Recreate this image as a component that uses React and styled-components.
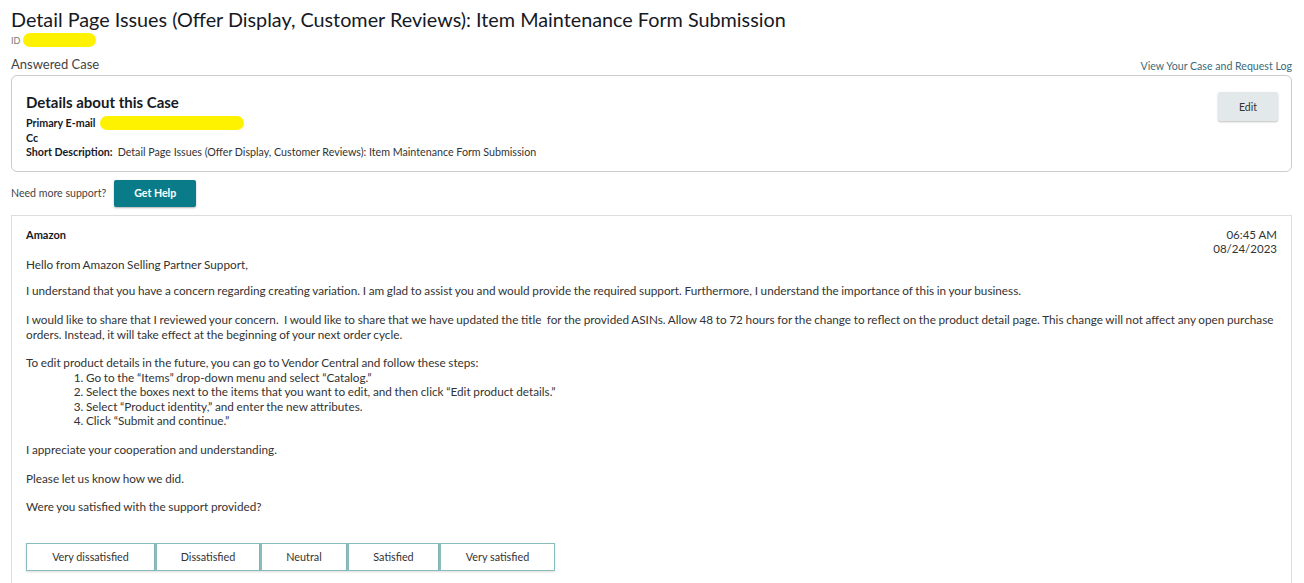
import React from 'react'
import styled, {createGlobalStyle} from 'styled-components'

const GlobalStyle = createGlobalStyle`
  html, body {
    margin: 0;
    padding: 0;
    background: #fff;
  }
  body {
    font-family: Lato, "Open Sans", "Liberation Sans", sans-serif;
    color: #333;
  }
`

const Page = styled.div`
  padding: 6px 12px 0 11px;
  height: 583px;
  overflow: hidden;
  box-sizing: border-box;
`

const Title = styled.h1`
  margin: 0;
  font-size: 19.8px;
  font-weight: 400;
  line-height: 26px;
  color: #16191f;
`

const IdRow = styled.div`
  display: flex;
  align-items: center;
  gap: 3px;
  height: 16px;
  font-size: 9px;
  color: #777;
`

const Marker = styled.span`
  display: inline-block;
  width: ${p => p.w}px;
  height: 14px;
  border-radius: 7px;
  background: #fff200;
`

const StatusRow = styled.div`
  display: flex;
  justify-content: space-between;
  align-items: flex-end;
  margin-top: 8px;
  height: 16px;
`

const Status = styled.span`
  font-size: 13px;
  color: #444;
`

const LogLink = styled.a`
  font-size: 10.6px;
  color: #3d6b78;
  text-decoration: none;
  cursor: pointer;
`

const DetailsCard = styled.section`
  margin-top: 3px;
  border: 1px solid #ccc;
  border-radius: 6px;
  padding: 16px 13px 11px 14px;
  display: flex;
  justify-content: space-between;
  align-items: flex-start;
`

const DetailsHead = styled.h2`
  margin: 0 0 4px;
  font-size: 15px;
  font-weight: 700;
  color: #16191f;
  line-height: 20px;
`

const Field = styled.div`
  display: flex;
  align-items: center;
  gap: 3px;
  font-size: 10.7px;
  line-height: 14.5px;
  color: #333;
`

const Label = styled.b`
  font-weight: 700;
  color: #16191f;
  margin-right: 2px;
`

const GreyButton = styled.button`
  margin-top: 0;
  width: 60px;
  height: 29px;
  border: none;
  border-radius: 2px;
  background: #e3e9ea;
  box-shadow: 0 1px 2px rgba(0, 0, 0, 0.25);
  font-family: inherit;
  font-size: 10.5px;
  color: #333;
`

const SupportRow = styled.div`
  display: flex;
  align-items: center;
  gap: 8px;
  margin: 8px 0 8px;
  font-size: 10.6px;
  color: #444;
`

const TealButton = styled.button`
  width: 82px;
  height: 27px;
  border: none;
  border-radius: 2px;
  background: #0a7c89;
  box-shadow: 0 1px 2px rgba(0, 0, 0, 0.3);
  color: #fff;
  font-family: inherit;
  font-weight: 700;
  font-size: 10.6px;
`

const Message = styled.article`
  border: 1px solid #ddd;
  border-bottom: none;
  padding: 12px 14px 20px 14px;
  font-size: 11.75px;
  line-height: 14.4px;
  word-spacing: -0.35px;
  color: #333;
`

const MessageHead = styled.div`
  display: flex;
  justify-content: space-between;
  align-items: flex-start;
  margin-bottom: 2px;
  word-spacing: normal;
`

const Sender = styled.b`
  font-size: 11px;
  font-weight: 700;
  color: #16191f;
`

const Stamp = styled.div`
  text-align: right;
  font-size: 11.5px;
  line-height: 14px;
  color: #333;
`

const Para = styled.p`
  margin: 0 0 ${p => (p.tight ? 12.5 : 14.4)}px;
`

const Steps = styled.ol`
  margin: 0 0 14.4px;
  padding-left: 60px;
`

const Ratings = styled.div`
  display: flex;
  margin-top: 28px;
  word-spacing: normal;
`

const Rate = styled.button`
  width: ${p => p.w}px;
  height: 28px;
  background: #fff;
  border: 1px solid #8bbcbc;
  box-shadow: 0 1px 2px rgba(0, 0, 0, 0.15);
  font-family: inherit;
  font-size: 10.8px;
  color: #333;
  & + & {
    border-left: 2px solid #8bbcbc;
  }
`

const ratings = [
  ['Very dissatisfied', 129],
  ['Dissatisfied', 105],
  ['Neutral', 87],
  ['Satisfied', 92],
  ['Very satisfied', 116]
]

const Hello = () => (
  <>
    <Para tight>Hello from Amazon Selling Partner Support,</Para>
    <Para>I understand that you have a concern regarding creating variation. I am glad to assist you and would provide the required support. Furthermore, I understand the importance of this in your business.</Para>
    <Para>I would like to share that I reviewed your concern.&nbsp; I would like to share that we have updated the title &nbsp;for the provided ASINs. Allow 48 to 72 hours for the change to reflect on the product detail page. This change will not affect any open purchase orders. Instead, it will take effect at the beginning of your next order cycle.</Para>
  </>
)

export default function App () {
  return (
    <Page>
      <GlobalStyle />
      <Title>Detail Page Issues (Offer Display, Customer Reviews): Item Maintenance Form Submission</Title>
      <IdRow>ID <Marker w={73} /></IdRow>
      <StatusRow>
        <Status>Answered Case</Status>
        <LogLink>View Your Case and Request Log</LogLink>
      </StatusRow>
      <DetailsCard>
        <div>
          <DetailsHead>Details about this Case</DetailsHead>
          <Field><Label>Primary E-mail</Label><Marker w={144} /></Field>
          <Field><Label>Cc</Label></Field>
          <Field><Label>Short Description:</Label> Detail Page Issues (Offer Display, Customer Reviews): Item Maintenance Form Submission</Field>
        </div>
        <GreyButton>Edit</GreyButton>
      </DetailsCard>
      <SupportRow>
        Need more support?
        <TealButton>Get Help</TealButton>
      </SupportRow>
      <Message>
        <MessageHead>
          <Sender>Amazon</Sender>
          <Stamp>06:45 AM<br />08/24/2023</Stamp>
        </MessageHead>
        <Hello />
        <div>To edit product details in the future, you can go to Vendor Central and follow these steps:</div>
        <Steps>
          <li>Go to the “Items” drop-down menu and select “Catalog.”</li>
          <li>Select the boxes next to the items that you want to edit, and then click “Edit product details.”</li>
          <li>Select “Product identity,” and enter the new attributes.</li>
          <li>Click “Submit and continue.”</li>
        </Steps>
        <Para>I appreciate your cooperation and understanding.</Para>
        <Para>Please let us know how we did.</Para>
        <Para>Were you satisfied with the support provided?</Para>
        <Ratings>
          {ratings.map(([t, w]) => <Rate key={t} w={w}>{t}</Rate>)}
        </Ratings>
      </Message>
    </Page>
  )
}
